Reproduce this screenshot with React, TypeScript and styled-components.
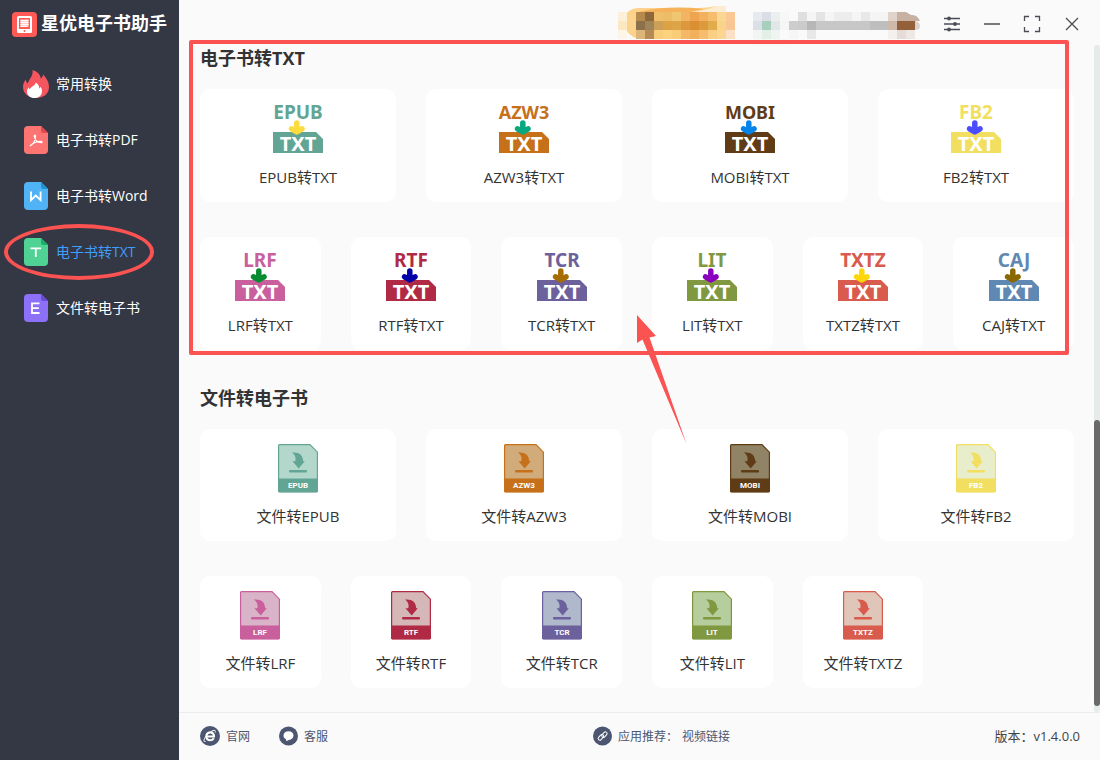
import React from 'react';
import styled, { createGlobalStyle } from 'styled-components';

const RED = '#fb5252';

const GlobalStyle = createGlobalStyle`
  * { box-sizing: border-box; }
  body {
    margin: 0;
    background: #fafafa;
    color: #333;
    font-family: 'Open Sans', 'Noto Sans CJK SC', sans-serif;
  }
  button { border: 0; background: none; padding: 0; font: inherit; color: inherit; cursor: pointer; }
  a { color: inherit; text-decoration: none; }
  h1, h2 { margin: 0; }
  svg { display: block; flex: none; overflow: visible; }
`;

const Window = styled.div`
  display: grid;
  grid-template-columns: 179px minmax(0, 1fr);
  min-height: 100vh;
`;

const Sidebar = styled.aside`
  background: #343744;
  color: #fff;
`;

const Brand = styled.header`
  display: flex;
  align-items: center;
  gap: 4px;
  height: 48px;
  padding-left: 12px;
`;

const BrandName = styled.h1`
  padding-bottom: 2px;
  font-size: 18px;
  line-height: 24px;
  font-weight: 700;
  white-space: nowrap;
`;

const Nav = styled.nav`
  display: flex;
  flex-direction: column;
  padding-top: 8px;
`;

const NavItem = styled.a<{ $active?: boolean }>`
  position: relative;
  display: flex;
  align-items: center;
  gap: 7px;
  height: 56px;
  padding-left: 23px;
  font-size: 14px;
  color: ${(p) => (p.$active ? '#409eff' : '#fff')};
  white-space: nowrap;
`;

const NavLabel = styled.span`
  padding-bottom: 2px;
`;

const Ellipse = styled.span`
  position: absolute;
  inset: 0 25px 0 4px;
  border: 4px solid ${RED};
  border-radius: 50%;
  pointer-events: none;
`;

const Main = styled.div`
  display: grid;
  grid-template-rows: 45px 1fr 48px;
  min-width: 0;
`;

const TitleBar = styled.header`
  display: flex;
  justify-content: flex-end;
  padding-right: 8px;
`;

const Badges = styled.div`
  display: flex;
  gap: 18px;
  padding-right: 12px;
`;

const WindowButton = styled.button`
  display: grid;
  place-items: center;
  width: 40px;
  height: 47px;
  color: #4b4d55;
`;

const Body = styled.div`
  display: flex;
`;

const Sections = styled.main`
  flex: 1;
  min-width: 0;
  display: flex;
  flex-direction: column;
  gap: 35px;
  padding: 0 20px 22px 21px;
`;

const Section = styled.section`
  position: relative;
`;

const SectionTitle = styled.h2`
  font-size: 18px;
  line-height: 26px;
  font-weight: 700;
  margin-bottom: 18px;
`;

const CardRow = styled.div<{ $columns: number }>`
  display: grid;
  grid-template-columns: repeat(${(p) => p.$columns}, minmax(0, 1fr));
  gap: 30px;
  & + & { margin-top: 35px; }
`;

const Card = styled.button<{ $gap: number }>`
  display: flex;
  flex-direction: column;
  align-items: center;
  gap: ${(p) => p.$gap}px;
  padding: 15px 0 14px;
  border-radius: 10px;
  background: #fff;
`;

const CardLabel = styled.span`
  font-size: 15px;
  line-height: 22px;
  white-space: nowrap;
`;

const Frame = styled.div`
  position: absolute;
  inset: -5px 5px -5px -11px;
  border: 4px solid ${RED};
  border-radius: 2px;
  pointer-events: none;
`;

const Pointer = styled.svg`
  position: absolute;
  z-index: 1;
  left: 50%;
  top: 270px;
  pointer-events: none;
`;

const Track = styled.div`
  display: flex;
  flex-direction: column;
  width: 6px;
  border-radius: 3px;
  background: #e7eaea;
`;

const TrackSpace = styled.div<{ $share: number }>`
  flex: ${(p) => p.$share} 0 0;
`;

const Thumb = styled.div<{ $share: number }>`
  flex: ${(p) => p.$share} 0 0;
  border-radius: 3px;
  background: #676a68;
`;

const Footer = styled.footer`
  display: grid;
  grid-template-columns: 393fr 487fr;
  align-items: center;
  padding: 0 20px 2px 21px;
  border-top: 1px solid #ebeef0;
  font-size: 12px;
  color: #4d5670;
`;

const FooterGroup = styled.div<{ $gap: number }>`
  display: flex;
  align-items: center;
  gap: ${(p) => p.$gap}px;
`;

const FooterLink = styled.a`
  display: flex;
  align-items: center;
  gap: 6px;
`;

const Version = styled.span`
  margin-left: auto;
  font-size: 13px;
  color: #444;
`;

/* ---------- icons ---------- */

const BrandIcon = () => (
  <svg width="25" height="25" viewBox="0 0 25 25" aria-hidden="true">
    <rect width="25" height="25" rx="4" fill="#ff5a55" />
    <rect x="5" y="4" width="15" height="17" rx="1.5" fill="#fff" />
    <rect x="7" y="6" width="11" height="11" fill="#ff5a55" />
    <rect x="8.500" y="7.500" width="8" height="7.500" fill="#ffd0cc" />
    <path d="M8.500 8.500h8M8.500 10.500h8M8.500 12.500h8M8.500 14.500h6" stroke="#fff" strokeWidth="1.100" />
    <circle cx="12.500" cy="19" r="1" fill="#ff5a55" />
  </svg>
);

const FlameIcon = () => (
  <svg width="26" height="28" viewBox="0 0 26 28" aria-hidden="true">
    <path d="M9.500 0C15 1.500 17.500 5 17.800 8.500 19.300 7.500 20 6 20 4.500 23.500 8 26 12 26 17c0 7-5.500 11-13 11S0 23.500 0 17c0-3.500 1.500-6 3-7.500 0 2 .5 3.200 1.800 4C6 9 10.500 6 9.500 0Z" fill="#f4555f" />
    <path d="M12.500 12.500c3 1.500 3.700 3.500 3.800 6 .8-.5 1-1 1.200-1.800 1.300 1.700 1.500 3 1.500 4.500 0 4.200-3.300 6.800-7.500 6.800S4 25.500 4 21.500c0-1.800.7-3.200 1.700-4.300.1 1 .5 1.600 1.200 2 .8-3 5.600-3 5.600-6.700Z" fill="#fff" />
  </svg>
);

const docGlyphs: Record<string, React.ReactNode> = {
  pdf: <path d="M7 20C10 18.500 13 14 12.500 10c-.3-1.500-1.500-.8-1.200.4.6 3.200 3.200 6 6.900 6.300 1.300 0 1.100-1.300-.3-1.300-3.500 0-7.900 1.400-10.900 4.600Z" fill="none" stroke="#fff" strokeWidth="1.200" />,
  word: <path d="M8 9.500v8.700l4.800-4.700 4.800 4.700V9.500" fill="none" stroke="#fff" strokeWidth="1.800" />,
  txt: <path d="M7.500 10.400h10.600M12.800 10.400v8.600" fill="none" stroke="#fff" strokeWidth="1.800" />,
  ebook: <path d="M16.500 9.400H9v9.600h7.500M9 14.200h6.800" fill="none" stroke="#fff" strokeWidth="1.800" />,
};

const DocIcon = ({ kind, color, fold }: { kind: string; color: string; fold: string }) => (
  <svg width="26" height="28" viewBox="0 0 26 28" aria-hidden="true">
    <path d="M5 0h13l7 7v17a4 4 0 0 1-4 4H5a4 4 0 0 1-4-4V4a4 4 0 0 1 4-4Z" fill={color} />
    <path d="M18 0l7 7h-4.500A2.500 2.500 0 0 1 18 4.500Z" fill={fold} />
    {docGlyphs[kind]}
  </svg>
);

type Format = { name: string; color: string; tint: string; arrow: string; size?: number };

const TxtIcon = ({ name, color, arrow, size = 19 }: Format) => (
  <svg width="50" height="50" viewBox="0 0 50 50" fontFamily="'Noto Sans', sans-serif" fontWeight="700" textAnchor="middle" aria-hidden="true">
    <text x="25" y="15" fontSize={size} fill={color}>{name}</text>
    <path d="M0 28h43l7 7v14H0Z" fill={color} />
    <text x="25" y="47" fontSize="20" fill="#fff">TXT</text>
    <path d="M23.800 19v8M18.600 24.800l5.200 3.200 5.200-3.200" fill="none" stroke={arrow} strokeWidth="5.500" strokeLinecap="round" strokeLinejoin="round" />
  </svg>
);

const FileIcon = ({ name, color, tint }: Format) => (
  <svg width="50" height="50" viewBox="-5 0 50 50" aria-hidden="true">
    <path d="M1.600.6H32l7.400 7.600v38.600q0 1-1 1H1.600q-1 0-1-1V1.600q0-1 1-1Z" fill={tint} stroke={color} strokeWidth="1.200" />
    <path d="M0 34.500h40V47q0 1.200-1.200 1.200H1.200Q0 48.200 0 47Z" fill={color} />
    <path d="M13.800 8.600C20.500 7.600 25.200 11 25.200 17.300H26.800L20.700 24.400 14.500 17.300H17.200C18.400 14 17 10.800 13.800 8.600Z" fill={color} />
    <rect x="11" y="26" width="18" height="2.600" rx="1" fill={color} />
    <text x="20" y="44" fontSize="8" fontWeight="700" fontFamily="Roboto, sans-serif" textAnchor="middle" fill="#fff">{name}</text>
  </svg>
);

const SlidersIcon = () => (
  <svg width="16" height="16" viewBox="0 0 16 16" aria-hidden="true">
    <path d="M0 2.500h16M0 8h16M0 13.500h16" stroke="currentColor" strokeWidth="1.300" />
    <circle cx="5" cy="2.500" r="1.900" fill="currentColor" />
    <circle cx="11" cy="8" r="1.900" fill="currentColor" />
    <circle cx="5" cy="13.500" r="1.900" fill="currentColor" />
  </svg>
);

const MinimizeIcon = () => (
  <svg width="16" height="16" viewBox="0 0 16 16" aria-hidden="true">
    <path d="M0 8h16" stroke="#333" strokeWidth="1.300" />
  </svg>
);

const MaximizeIcon = () => (
  <svg width="18" height="18" viewBox="0 0 18 18" aria-hidden="true">
    <path d="M1.500 6V1.500h4.500M12 1.500h4.500v4.500M16.500 12v4.500h-4.500M6 16.500H1.500v-4.500" fill="none" stroke="currentColor" strokeWidth="1.300" />
  </svg>
);

const CloseIcon = () => (
  <svg width="14" height="14" viewBox="0 0 14 14" aria-hidden="true">
    <path d="M1 1l12 12M13 1L1 13" stroke="currentColor" strokeWidth="1.300" />
  </svg>
);

const BrowserIcon = () => (
  <svg width="20" height="20" viewBox="0 0 20 20" aria-hidden="true">
    <circle cx="10" cy="10" r="10" fill="#4d5670" />
    <path d="M13.800 12.300c-.8 1.300-2 2-3.600 2-2.300 0-3.900-1.700-3.900-3.900s1.600-4 3.900-4 3.900 1.600 3.800 4.100H7" fill="none" stroke="#fff" strokeWidth="2.100" />
    <path d="M5.500 15.500c-2 .8-2-1.500-.2-4.300 2.300-3.600 7.800-7.700 9.700-6.700.7.400.5 1.200.2 2" fill="none" stroke="#fff" strokeWidth="1" />
  </svg>
);

const ChatIcon = () => (
  <svg width="19" height="20" viewBox="0 0 19 20" aria-hidden="true">
    <circle cx="9.500" cy="10" r="9.500" fill="#4d5670" />
    <path d="M9.500 5.300c3 0 5 1.700 5 4.200s-2 4.300-4.500 4.400c-.8 0-1.800 1-2.800.8-.8-.2.200-1.200-.3-1.600C5.300 12.500 4.500 11.200 4.500 9.500c0-2.500 2-4.200 5-4.200Z" fill="#fff" />
  </svg>
);

const ChainIcon = () => (
  <svg width="19" height="20" viewBox="0 0 19 20" aria-hidden="true">
    <circle cx="9.500" cy="10" r="9.500" fill="#4d5670" />
    <g transform="rotate(-48 9.500 10)" fill="none" stroke="#fff" strokeWidth="1">
      <rect x="4.200" y="8" width="6.400" height="3.400" rx="1.700" />
      <rect x="8.600" y="8.800" width="6.400" height="3.400" rx="1.700" />
    </g>
  </svg>
);

/* Pixelated badges: every cell is 9px square; rows list colours left to right. */
const CELL = 9;

const Cells = ({ rows, top }: { rows: string[][]; top: number }) => (
  <g shapeRendering="crispEdges">
    {rows.map((row, r) =>
      row.map((fill, c) =>
        fill ? <rect key={`${r}-${c}`} x={c * CELL} y={top + r * CELL} width={CELL} height={CELL} fill={fill} /> : null,
      ),
    )}
  </g>
);

const vipRows = [
  ['#fdf0d8', '', '#b58a4c', '#8d673b', '#f0bf6a', '#ecbc66', '#f1c673', '#f1b463', '#efa550', '#f3b05e', '#f6bd6e', '#fbd794', '#fac894'],
  ['#fbe8c0', '#fad38c', '#8c7049', '#a0855a', '#cda058', '#dca244', '#dea548', '#dc983c', '#da9032', '#dd9a3c', '#e0ac4c', '#fad38a', '#f7c694'],
  ['#fdf6e8', '', '#dcb578', '#b58a55', '#f9ce7a', '#fad280', '#f9cc78', '#f4b866', '#f2b05c', '#f6bd6e', '#f9cf84', '#fbd692', '#fbe0c6'],
];

const g = '#c7c7c7';
const userRows = [
  ['#e6eaef', '#dadfe6', '#eceef0', '#f6f7f7', '', '#dfdfdf', '#f5f5f5', '#e4e4e4', '#f5f5f5', '#ededed', '#ededed', '#f5f5f5', '#e8e8e8', '#f5f5f5', '#f4f4f4', '#e0d4ca', '', ''],
  ['#dbe0e8', '#a7cfbb', '#e3e6e9', '#f5f6f6', '#cdcdcd', '#cbcbcb', '#b7b7b7', g, g, g, g, g, g, '#bebebe', '#bebebe', '#cdb8aa', '#936039', '#936039'],
  ['#f2f5f4', '#e3f0e7', '#eff3f1', '', '#f6f6f6', '', '#e8e8e8', '', '', '', '', '', '', '', '', '#f3f0ee', '#e6dcd7', '#eee8e5'],
];

const VipBadge = () => (
  <svg width="117" height="45" viewBox="0 0 117 45" role="img" aria-label="VIP">
    <path d="M6 18Q10 8 20 8H74Q90 8 98 6H108V12H60V39H24Q14 39 8 30Z" fill="#fcd28c" />
    <path d="M20 12Q50 5 86 9L72 12Z" fill="#f6b25a" />
    <path d="M74 12Q90 10 98 6H108V12Z" fill="#fdebd2" />
    <Cells rows={vipRows} top={12} />
  </svg>
);

const UserBadge = () => (
  <svg width="167" height="45" viewBox="0 0 167 45" role="img" aria-label="User">
    <path d="M144 12h9l5 3q6-1 9 6h-23Z" fill="#c6b1a3" />
    <path d="M162 21q5 1 5 5t-5 4Z" fill="#dcd2cd" />
    <Cells rows={userRows} top={12} />
    <path d="M0 39h36v6H0Z" fill="#f6f8f7" />
  </svg>
);

/* ---------- data ---------- */

const wide: Format[] = [
  { name: 'EPUB', color: '#62a594', tint: '#b3d8cb', arrow: '#fcdc3c' },
  { name: 'AZW3', color: '#c6711a', tint: '#d2ab7b', arrow: '#08a77f', size: 18 },
  { name: 'MOBI', color: '#5f3c16', tint: '#918366', arrow: '#0784ea', size: 18 },
  { name: 'FB2', color: '#f2df61', tint: '#e8eecb', arrow: '#4c4cff' },
];

const narrow: Format[] = [
  { name: 'LRF', color: '#c95f9d', tint: '#d9b4c8', arrow: '#078c32' },
  { name: 'RTF', color: '#b02a46', tint: '#d5b7b7', arrow: '#0202a6' },
  { name: 'TCR', color: '#6c619d', tint: '#b0b8cc', arrow: '#a66d02' },
  { name: 'LIT', color: '#80983f', tint: '#b6cd9d', arrow: '#8a02bd' },
  { name: 'TXTZ', color: '#d95b4d', tint: '#e0c5b9', arrow: '#ffd60a' },
  { name: 'CAJ', color: '#5f88b3', tint: '#b4c8dc', arrow: '#8a6802' },
];

const navItems = [
  { label: '常用转换', icon: <FlameIcon /> },
  { label: '电子书转PDF', icon: <DocIcon kind="pdf" color="#fd7573" fold="#e2474b" /> },
  { label: '电子书转Word', icon: <DocIcon kind="word" color="#50b3f5" fold="#1d93d2" /> },
  { label: '电子书转TXT', icon: <DocIcon kind="txt" color="#4fd293" fold="#1cae68" />, active: true },
  { label: '文件转电子书', icon: <DocIcon kind="ebook" color="#8c70f7" fold="#6a4ad8" /> },
];

const TxtCard = (format: Format) => (
  <Card type="button" $gap={12}>
    <TxtIcon {...format} />
    <CardLabel>{format.name}转TXT</CardLabel>
  </Card>
);

const FileCard = (format: Format) => (
  <Card type="button" $gap={11}>
    <FileIcon {...format} />
    <CardLabel>文件转{format.name}</CardLabel>
  </Card>
);

export default function App() {
  return (
    <>
      <GlobalStyle />
      <Window>
        <Sidebar>
          <Brand>
            <BrandIcon />
            <BrandName>星优电子书助手</BrandName>
          </Brand>
          <Nav>
            {navItems.map((item) => (
              <NavItem key={item.label} href="#" $active={item.active}>
                {item.icon}
                <NavLabel>{item.label}</NavLabel>
                {item.active && <Ellipse />}
              </NavItem>
            ))}
          </Nav>
        </Sidebar>
        <Main>
          <TitleBar>
            <Badges>
              <VipBadge />
              <UserBadge />
            </Badges>
            <WindowButton type="button" aria-label="设置"><SlidersIcon /></WindowButton>
            <WindowButton type="button" aria-label="最小化"><MinimizeIcon /></WindowButton>
            <WindowButton type="button" aria-label="最大化"><MaximizeIcon /></WindowButton>
            <WindowButton type="button" aria-label="关闭"><CloseIcon /></WindowButton>
          </TitleBar>
          <Body>
            <Sections>
              <Section>
                <SectionTitle>电子书转TXT</SectionTitle>
                <CardRow $columns={4}>
                  {wide.map((f) => <TxtCard key={f.name} {...f} />)}
                </CardRow>
                <CardRow $columns={6}>
                  {narrow.map((f) => <TxtCard key={f.name} {...f} />)}
                </CardRow>
                <Frame />
                <Pointer width="50" height="130" viewBox="0 0 50 130" aria-hidden="true">
                  <path d="M0 0L19 21 12.500 22.500 49.500 129 5.500 24.500 0 28Z" fill={RED} />
                </Pointer>
              </Section>
              <Section>
                <SectionTitle>文件转电子书</SectionTitle>
                <CardRow $columns={4}>
                  {wide.map((f) => <FileCard key={f.name} {...f} />)}
                </CardRow>
                <CardRow $columns={6}>
                  {narrow.slice(0, 5).map((f) => <FileCard key={f.name} {...f} />)}
                </CardRow>
              </Section>
            </Sections>
            <Track>
              <TrackSpace $share={375} />
              <Thumb $share={286} />
              <TrackSpace $share={6} />
            </Track>
          </Body>
          <Footer>
            <FooterGroup $gap={29}>
              <FooterLink href="#"><BrowserIcon />官网</FooterLink>
              <FooterLink href="#"><ChatIcon />客服</FooterLink>
            </FooterGroup>
            <FooterGroup $gap={4}>
              <FooterLink as="span"><ChainIcon />应用推荐：</FooterLink>
              <FooterLink href="#">视频链接</FooterLink>
              <Version>版本：v1.4.0.0</Version>
            </FooterGroup>
          </Footer>
        </Main>
      </Window>
    </>
  );
}
